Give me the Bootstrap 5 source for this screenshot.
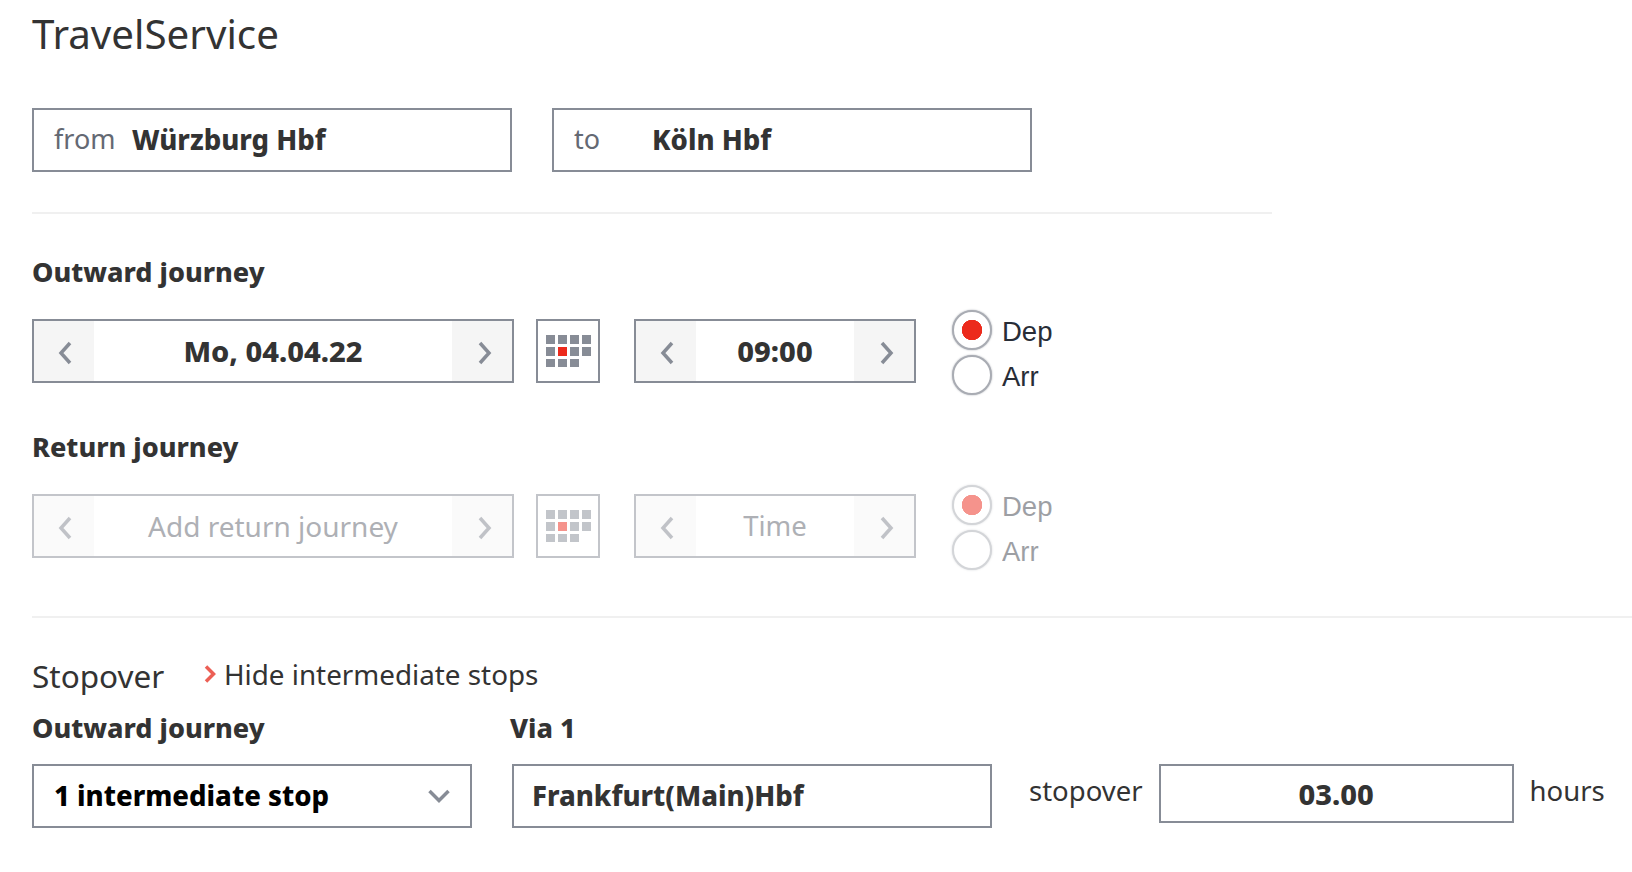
<!DOCTYPE html>
<html lang="en">
<head>
  <meta charset="UTF-8">
  <title>TravelService</title>
  <link href="https://cdn.jsdelivr.net/npm/bootstrap@5.3.0/dist/css/bootstrap.min.css" rel="stylesheet">
  <style>
    body {
      font-family: "Noto Sans", sans-serif;
      color: #333;
      background: #fff;
      font-size: 27.5px;
    }
    .page-wrap { padding-left: 32px; overflow: hidden; }
    .page-title { font-size: 40.300px; font-weight: 400; line-height: 68px; margin: 0 0 40px; }
    .field-box {
      border: 2px solid #878c96;
      height: 64px;
      background: #fff;
      display: flex;
      align-items: center;
    }
    .place-box { width: 480px; padding-left: 20px; }
    .place-hint { color: #646973; width: 78px; font-size: 27px; margin-top: -2px; }
    .strong-val { font-weight: 800; font-size: 27.5px; }
    .num-val { font-weight: 800; font-size: 29px; }
    .rule-short { width: 1240px; height: 2px; background: #f0f0f0; margin: 40px 0 38px; }
    .rule-long { height: 2px; background: #f0f0f0; margin: 58px 0 37px; }
    .group-label { font-weight: 800; font-size: 27px; line-height: 40px; }
    .date-box { width: 482px; }
    .time-box { width: 282px; }
    .step-cell { width: 60px; height: 100%; background: #f5f5f5; display: flex; align-items: center; justify-content: center; flex: none; }
    .step-cell svg { margin: 3px 0 0 1px; }
    .step-cell.step-next svg { margin-left: 5px; }
    .step-mid { flex: 1; text-align: center; }
    .cal-box { width: 64px; justify-content: center; margin: 0 34px 0 22px; }
    .radio-col { margin: -12px 0 0 36px; font-family: "Liberation Sans", sans-serif; color: #282d37; line-height: 44px; }
    .radio-row { display: flex; align-items: center; height: 45px; margin: 0; }
    .radio-row .form-check-label { margin-top: 4px; }
    .radio-row .form-check-input {
      width: 40px; height: 40px; margin: 0 10px 0 0; float: none;
      border: 2px solid #a9acb3;
      box-shadow: 0 0 2px #a9acb3;
      background-image: none;
    }
    .radio-row .form-check-input:checked {
      background-color: #fff;
      border-color: #a9acb3;
      background-image: radial-gradient(circle, #ec2a1c 10px, #fff 10.5px);
    }
    .radio-row .form-check-input:disabled { opacity: .5; }
    .radio-row .form-check-input:disabled ~ .form-check-label { opacity: .45; }
    .journey-row { margin-top: 27px; margin-bottom: 44px; height: 64px; }
    .journey-row.is-off { margin-bottom: 0; }
    .is-off .field-box { border-color: #c3c5ca; }
    .is-off .step-cell { background: #fafafa; }
    .is-off svg { opacity: .5; }
    .is-off .step-mid { color: #aeb0b5; }
    .is-off .date-box .step-mid { font-size: 28px; }
    .stop-head { height: 45px; margin-bottom: 8px; }
    .stop-title { font-size: 31.500px; width: 172px; line-height: 44px; margin-top: -1px; }
    .stop-toggle { color: #333; text-decoration: none; font-size: 27.800px; line-height: 36px; margin-top: -7px; display: flex; align-items: center; gap: 8px; }
    .label-first { width: 478px; }
    .stop-row { margin-top: 16px; }
    .select-box { width: 440px; padding: 0 20px; justify-content: space-between; }
    .via-box { width: 480px; padding-left: 18px; margin-left: 40px; }
    .stop-note { margin: 0 16px 0 37px; line-height: 54px; }
    .hours-box { width: 355px; height: 59px; justify-content: center; }
    .hours-note { margin-left: 16px; line-height: 54px; }
  </style>
</head>
<body>
  <div class="page-wrap">
    <h1 class="page-title">TravelService</h1>

    <div class="d-flex" style="gap: 40px">
      <div class="field-box place-box"><span class="place-hint">from</span><span class="strong-val">Würzburg Hbf</span></div>
      <div class="field-box place-box"><span class="place-hint">to</span><span class="strong-val">Köln Hbf</span></div>
    </div>
    <div class="rule-short"></div>

    <div class="group-label">Outward journey</div>
    <div class="d-flex align-items-start journey-row">
      <div class="field-box date-box">
        <div class="step-cell"><svg width="16" height="24" viewBox="0 0 16 24"><path d="M13 2 4 12l9 10" fill="none" stroke="#878c96" stroke-width="3.500"/></svg></div>
        <div class="step-mid num-val">Mo, 04.04.22</div>
        <div class="step-cell step-next"><svg width="16" height="24" viewBox="0 0 16 24"><path d="m3 2 9 10-9 10" fill="none" stroke="#878c96" stroke-width="3.500"/></svg></div>
      </div>
      <div class="field-box cal-box">
        <svg width="46" height="34" viewBox="-1 -1 46 34" fill="#878c96">
          <rect x="0" y="0" width="9" height="9"/><rect x="12" y="0" width="9" height="9"/><rect x="24" y="0" width="9" height="9"/><rect x="36" y="0" width="9" height="9"/>
          <rect x="0" y="12" width="9" height="9"/><rect x="12" y="12" width="9" height="9" fill="#ec2a1c"/><rect x="24" y="12" width="9" height="9"/><rect x="36" y="12" width="9" height="9"/>
          <rect x="0" y="24" width="9" height="8"/><rect x="12" y="24" width="9" height="8"/><rect x="24" y="24" width="9" height="8"/>
        </svg>
      </div>
      <div class="field-box time-box">
        <div class="step-cell"><svg width="16" height="24" viewBox="0 0 16 24"><path d="M13 2 4 12l9 10" fill="none" stroke="#878c96" stroke-width="3.500"/></svg></div>
        <div class="step-mid num-val">09:00</div>
        <div class="step-cell step-next"><svg width="16" height="24" viewBox="0 0 16 24"><path d="m3 2 9 10-9 10" fill="none" stroke="#878c96" stroke-width="3.500"/></svg></div>
      </div>
      <div class="radio-col">
        <div class="form-check radio-row p-0"><input class="form-check-input" type="radio" name="outDir" id="outDep" checked><label class="form-check-label" for="outDep">Dep</label></div>
        <div class="form-check radio-row p-0"><input class="form-check-input" type="radio" name="outDir" id="outArr"><label class="form-check-label" for="outArr">Arr</label></div>
      </div>
    </div>

    <div class="group-label">Return journey</div>
    <div class="d-flex align-items-start journey-row is-off">
      <div class="field-box date-box">
        <div class="step-cell"><svg width="16" height="24" viewBox="0 0 16 24"><path d="M13 2 4 12l9 10" fill="none" stroke="#878c96" stroke-width="3.500"/></svg></div>
        <div class="step-mid">Add return journey</div>
        <div class="step-cell step-next"><svg width="16" height="24" viewBox="0 0 16 24"><path d="m3 2 9 10-9 10" fill="none" stroke="#878c96" stroke-width="3.500"/></svg></div>
      </div>
      <div class="field-box cal-box">
        <svg width="46" height="34" viewBox="-1 -1 46 34" fill="#878c96">
          <rect x="0" y="0" width="9" height="9"/><rect x="12" y="0" width="9" height="9"/><rect x="24" y="0" width="9" height="9"/><rect x="36" y="0" width="9" height="9"/>
          <rect x="0" y="12" width="9" height="9"/><rect x="12" y="12" width="9" height="9" fill="#ec2a1c"/><rect x="24" y="12" width="9" height="9"/><rect x="36" y="12" width="9" height="9"/>
          <rect x="0" y="24" width="9" height="8"/><rect x="12" y="24" width="9" height="8"/><rect x="24" y="24" width="9" height="8"/>
        </svg>
      </div>
      <div class="field-box time-box">
        <div class="step-cell"><svg width="16" height="24" viewBox="0 0 16 24"><path d="M13 2 4 12l9 10" fill="none" stroke="#878c96" stroke-width="3.500"/></svg></div>
        <div class="step-mid">Time</div>
        <div class="step-cell step-next"><svg width="16" height="24" viewBox="0 0 16 24"><path d="m3 2 9 10-9 10" fill="none" stroke="#878c96" stroke-width="3.500"/></svg></div>
      </div>
      <div class="radio-col">
        <div class="form-check radio-row p-0"><input class="form-check-input" type="radio" name="retDir" id="retDep" checked disabled><label class="form-check-label" for="retDep">Dep</label></div>
        <div class="form-check radio-row p-0"><input class="form-check-input" type="radio" name="retDir" id="retArr" disabled><label class="form-check-label" for="retArr">Arr</label></div>
      </div>
    </div>
    <div class="rule-long"></div>

    <div class="d-flex stop-head">
      <div class="stop-title">Stopover</div>
      <a class="stop-toggle" href="#"><svg width="12" height="18" viewBox="0 0 12 18"><path d="m2 1.500 7.500 7.500L2 16.500" fill="none" stroke="#ec5f55" stroke-width="3.500"/></svg>Hide intermediate stops</a>
    </div>
    <div class="d-flex">
      <div class="group-label label-first">Outward journey</div>
      <div class="group-label">Via 1</div>
    </div>
    <div class="d-flex align-items-start stop-row">
      <div class="field-box select-box">
        <span class="strong-val text-black">1 intermediate stop</span>
        <svg width="22" height="14" viewBox="0 0 22 14"><path d="m1.500 2 9.500 9.500L20.500 2" fill="none" stroke="#878c96" stroke-width="3.500"/></svg>
      </div>
      <div class="field-box via-box"><span class="strong-val">Frankfurt(Main)Hbf</span></div>
      <span class="stop-note">stopover</span>
      <div class="field-box hours-box"><span class="num-val">03.00</span></div>
      <span class="hours-note">hours</span>
    </div>
  </div>
  <script src="https://cdn.jsdelivr.net/npm/bootstrap@5.3.0/dist/js/bootstrap.bundle.min.js"></script>
</body>
</html>
